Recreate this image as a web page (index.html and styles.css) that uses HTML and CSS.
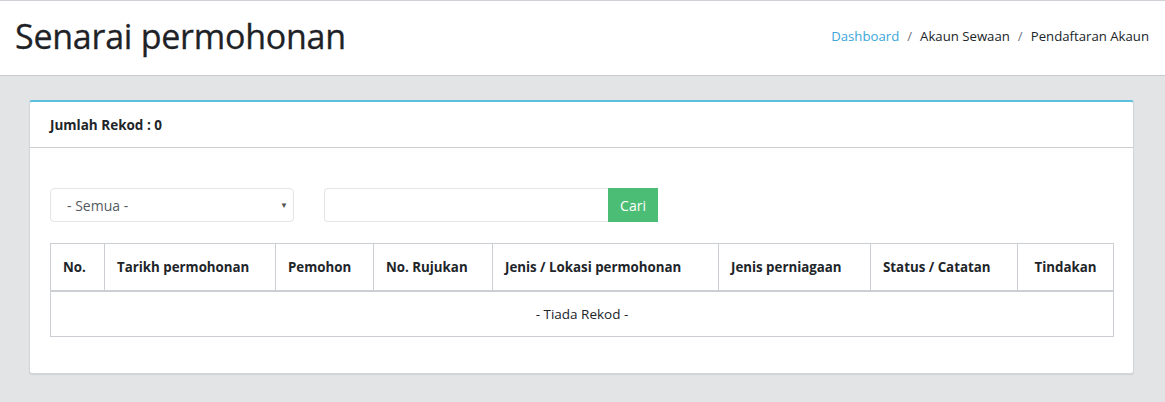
FILE: index.html
```html
<!DOCTYPE html>
<html lang="ms">
<head>
<meta charset="utf-8">
<title>Senarai permohonan</title>
<link rel="stylesheet" href="styles.css">
</head>
<body>
<header class="page-header">
  <h1 class="page-title">Senarai permohonan</h1>
  <nav class="breadcrumb">
    <a class="crumb-link" href="#">Dashboard</a>
    <span class="sep">/</span>
    <span class="crumb">Akaun Sewaan</span>
    <span class="sep">/</span>
    <span class="crumb">Pendaftaran Akaun</span>
  </nav>
</header>
<main class="content">
  <section class="card">
    <div class="card-header">Jumlah Rekod : 0</div>
    <div class="card-body">
      <div class="filters">
        <div class="select">
          <span class="select-text">- Semua -</span>
          <span class="caret">▼</span>
        </div>
        <div class="search">
          <div class="search-input"></div>
          <button class="btn-cari" type="button">Cari</button>
        </div>
      </div>
      <table class="grid">
        <thead>
          <tr>
            <th class="c-no">No.</th>
            <th class="c-tarikh">Tarikh permohonan</th>
            <th class="c-pemohon">Pemohon</th>
            <th class="c-ruj">No. Rujukan</th>
            <th class="c-jenis">Jenis / Lokasi permohonan</th>
            <th class="c-niaga">Jenis perniagaan</th>
            <th class="c-status">Status / Catatan</th>
            <th class="c-tindakan">Tindakan</th>
          </tr>
        </thead>
        <tbody>
          <tr>
            <td class="empty" colspan="8">- Tiada Rekod -</td>
          </tr>
        </tbody>
      </table>
    </div>
  </section>
</main>
</body>
</html>
```
FILE: styles.css
```css
* { box-sizing: border-box; }
html, body { margin: 0; padding: 0; }
body {
  font-family: "Open Sans", "Noto Sans", sans-serif;
  background: #e2e4e6;
  color: #212529;
  height: 402px;
  overflow: hidden;
}
.page-header {
  background: #fff;
  border-top: 1px solid #cfd2d6;
  border-bottom: 1px solid #c8cbcf;
  height: 76px;
  display: flex;
  align-items: center;
  justify-content: space-between;
  padding: 0 16px 0 15px;
}
.page-title {
  margin: 0;
  font-size: 34px;
  font-weight: 400;
  color: #1e2226;
  letter-spacing: -0.25px;
  position: relative;
  top: -2px;
  -webkit-text-stroke: 0.3px #1e2226;
}
.breadcrumb {
  font-size: 13.2px;
  display: flex;
  gap: 8px;
  color: #212529;
  position: relative;
  top: -2px;
}
.crumb-link { color: #3aa6d9; text-decoration: none; }
.sep { color: #6c757d; }
.content { padding: 24px 31px 0 29px; }
.card {
  background: #fff;
  border: 1px solid #d2d5d9;
  border-top: 2px solid #5bc0de;
  border-radius: 3px;
  box-shadow: 0 1px 1px rgba(0,0,0,0.08);
  height: 274px;
}
.card-header {
  height: 46px;
  border-bottom: 1px solid #ccced2;
  padding: 0 20px;
  display: flex;
  align-items: center;
  font-weight: 700;
  font-size: 13.5px;
  color: #212529;
}
.card-body { padding: 40px 20px 20px 20px; }
.filters { display: flex; gap: 30px; height: 34px; }
.select {
  width: 244px;
  height: 34px;
  border: 1px solid #e3e5e8;
  border-radius: 4px;
  display: flex;
  align-items: center;
  justify-content: space-between;
  padding: 0 5px 0 16px;
  font-size: 14px;
  color: #555b62;
}
.caret { font-size: 8px; color: #555; position: relative; top: -1px; }
.search { display: flex; }
.search-input {
  width: 284px;
  height: 34px;
  border: 1px solid #e3e5e8;
  border-right: none;
  border-radius: 4px 0 0 4px;
}
.btn-cari {
  width: 50px;
  height: 34px;
  border: none;
  background: #4cbd74;
  color: #fff;
  font-family: inherit;
  font-size: 14px;
  padding: 0;
}
.grid {
  margin-top: 21px;
  width: 1063px;
  border-collapse: collapse;
  table-layout: fixed;
  font-size: 13.3px;
}
.grid th, .grid td { border: 1px solid #cbced3; }
.grid th {
  height: 47px;
  text-align: left;
  padding: 0 12px;
  font-weight: 700;
  color: #212529;
  border-bottom: 2px solid #cbced3;
  white-space: nowrap;
}
.grid th.c-tindakan { text-align: center; }
.c-no { width: 54px; }
.c-tarikh { width: 171px; }
.c-pemohon { width: 98px; }
.c-ruj { width: 119px; }
.c-jenis { width: 226px; }
.c-niaga { width: 152px; }
.c-status { width: 147px; }
.c-tindakan { width: 96px; }
.empty {
  height: 46px;
  text-align: center;
  font-size: 13.5px;
  color: #212529;
}
```
